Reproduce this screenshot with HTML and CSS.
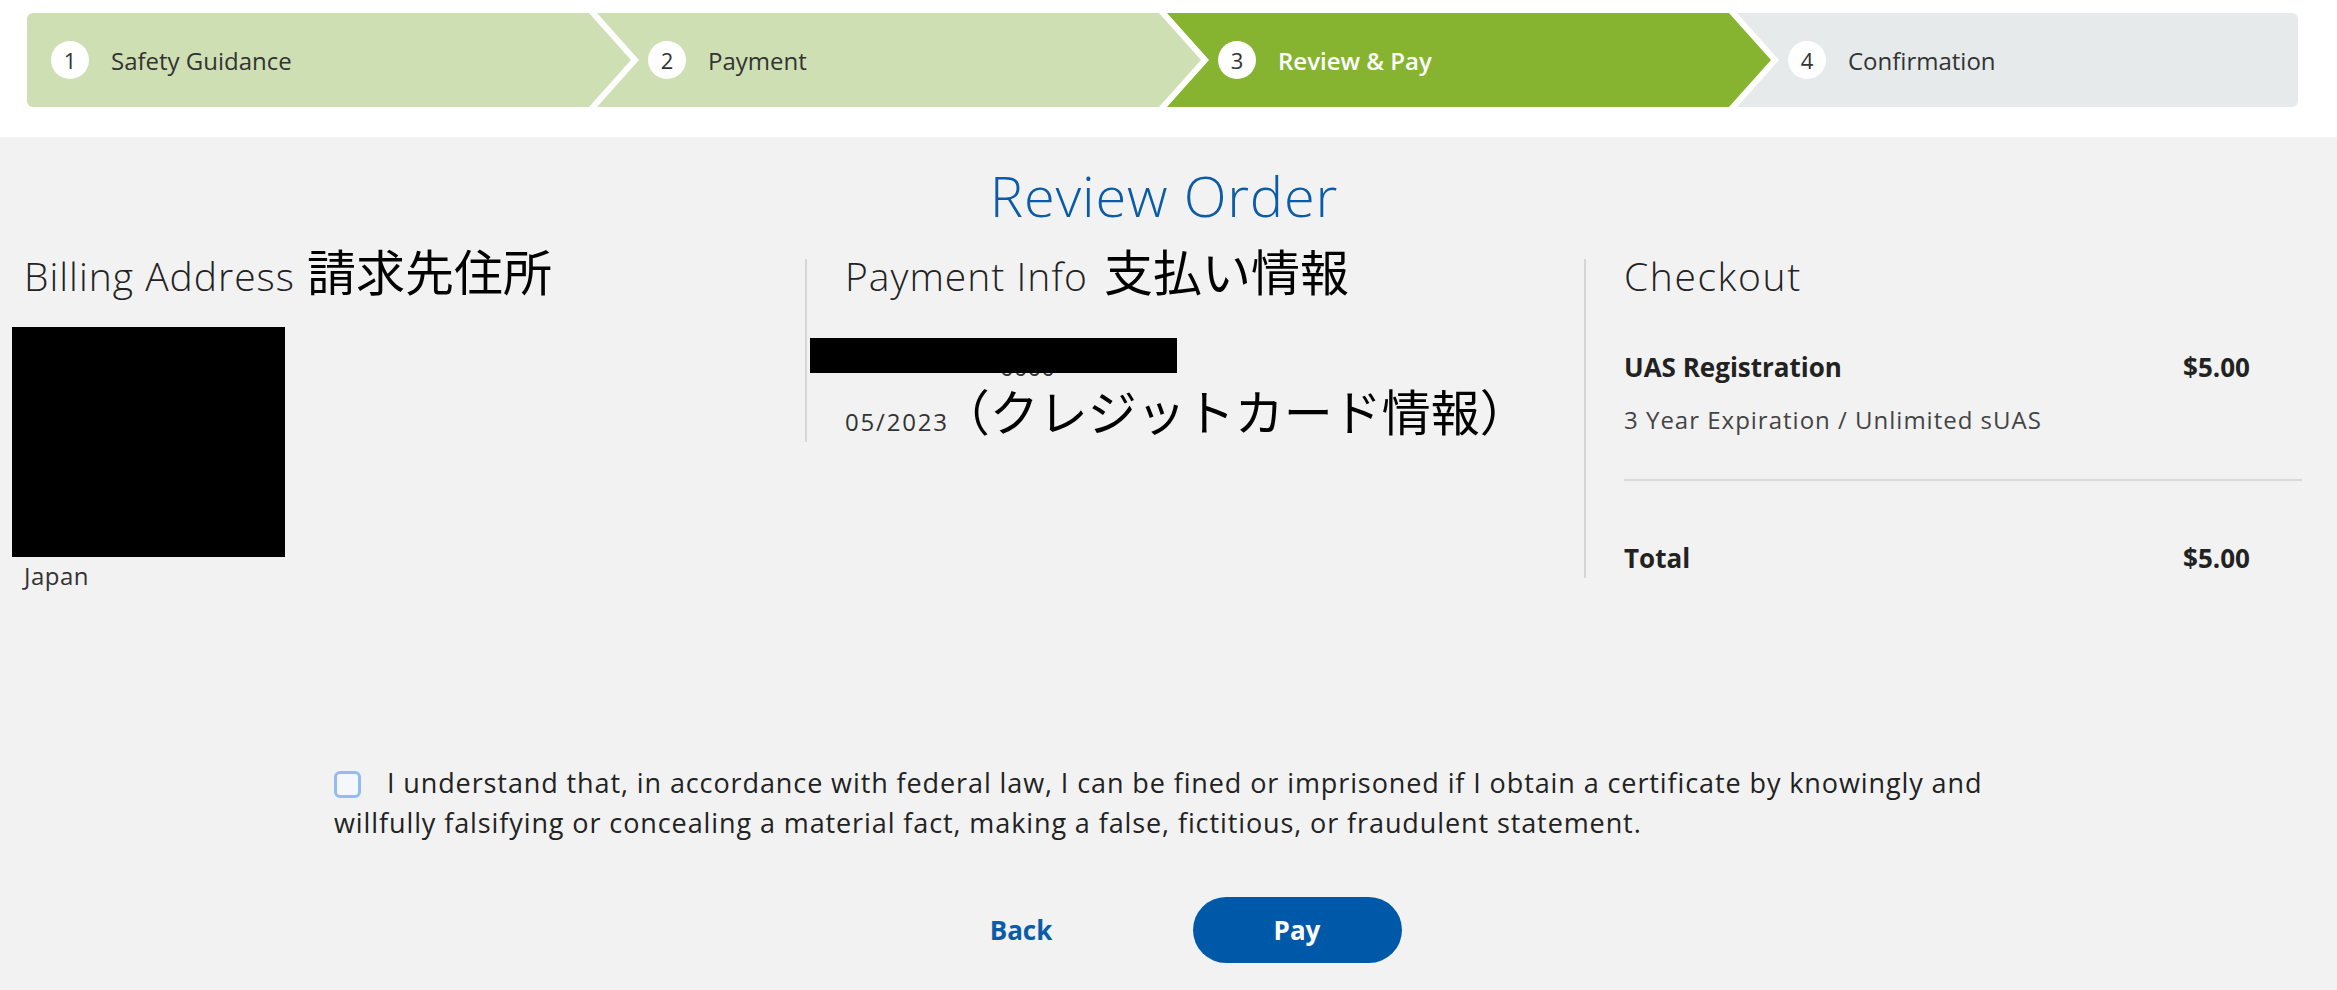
FILE: index.html
```html
<!DOCTYPE html>
<html lang="en">

<head>
    <meta charset="UTF-8">
    <meta name="viewport" content="width=device-width, initial-scale=1.0">
    <title>Review &amp; Pay</title>
    <link rel="stylesheet" href="styles.css">
</head>

<body>
    <!-- Progress steps -->
    <header class="steps-bar">
        <ol class="steps">
            <li class="step step-done"><span class="step-num">1</span>Safety Guidance</li>
            <li class="step step-done"><span class="step-num">2</span>Payment</li>
            <li class="step step-active"><span class="step-num">3</span>Review &amp; Pay</li>
            <li class="step"><span class="step-num">4</span>Confirmation</li>
        </ol>
    </header>

    <main class="review">
        <h1 class="review-title">Review Order</h1>

        <div class="review-cols">
            <!-- Billing -->
            <section class="col">
                <h2 class="col-title">Billing Address<span class="note">請求先住所</span></h2>
                <div class="redact-block"></div>
                <p class="address-country">Japan</p>
            </section>

            <!-- Payment -->
            <section class="col col-divided">
                <h2 class="col-title">Payment Info<span class="note note-near">支払い情報</span></h2>
                <div class="card-number">
                    <span class="card-mask">•••• •••• ••••</span> 0000
                    <span class="redact"></span>
                </div>
                <p class="card-expiry">05/2023<span class="note note-sm">（クレジットカード情報）</span></p>
            </section>

            <!-- Checkout -->
            <section class="col col-divided col-checkout">
                <h2 class="col-title checkout-title">Checkout</h2>
                <div class="line-item">
                    <span>UAS Registration</span>
                    <span>$5.00</span>
                </div>
                <p class="line-desc">3 Year Expiration / Unlimited sUAS</p>
                <hr class="line-sep">
                <div class="line-item line-total">
                    <span>Total</span>
                    <span>$5.00</span>
                </div>
            </section>
        </div>

        <label class="agree">
            <input type="checkbox" class="agree-box"> I understand that, in accordance with federal law, I can be fined or imprisoned if I obtain a certificate by knowingly and willfully falsifying or concealing a material fact, making a false, fictitious, or fraudulent statement.
        </label>

        <div class="actions">
            <button type="button" class="btn-back">Back</button>
            <button type="button" class="btn-pay">Pay</button>
        </div>
    </main>
</body>

</html>
```

FILE: styles.css
```css
body {
    margin: 0;
    background-color: #f2f2f2;
    font-family: "Open Sans", Arial, sans-serif;
    color: #333;
}

/* Steps */
.steps-bar {
    background-color: #fff;
    padding: 13px 39px 30px 27px;
}

.steps {
    display: flex;
    margin: 0;
    padding: 0;
    list-style: none;
}

.step {
    flex: 0 0 604px;
    box-sizing: border-box;
    height: 94px;
    margin-right: -34px;
    padding-left: 51px;
    display: flex;
    align-items: center;
    background-color: #cfdfb4;
    color: #333;
    font-size: 24px;
    font-weight: 500;
    clip-path: polygon(0 0, calc(100% - 42px) 0, 100% 50%, calc(100% - 42px) 100%, 0 100%, 42px 50%);
}

.step:first-child {
    padding-left: 24px;
    border-radius: 6px 0 0 6px;
    clip-path: polygon(0 0, calc(100% - 42px) 0, 100% 50%, calc(100% - 42px) 100%, 0 100%);
}

.step:last-child {
    flex: 1;
    margin-right: 0;
    border-radius: 0 6px 6px 0;
    background-color: #e6eaeb;
    clip-path: polygon(0 0, 100% 0, 100% 100%, 0 100%, 42px 50%);
}

.step-active {
    background-color: #86b431;
    color: #fff;
    font-weight: 600;
}

.step-num {
    flex-shrink: 0;
    width: 38px;
    height: 38px;
    margin-right: 22px;
    border-radius: 50%;
    background-color: #fff;
    color: #333;
    font-size: 22px;
    font-weight: 500;
    display: flex;
    align-items: center;
    justify-content: center;
}

/* Review */
.review-title {
    margin: 24px 0 30px;
    padding-right: 9px;
    text-align: center;
    font-size: 56px;
    line-height: 68px;
    font-weight: 300;
    letter-spacing: 0.8px;
    color: #0b5ca8;
}

.review-cols {
    display: grid;
    grid-template-columns: 781px 779px 1fr;
    align-items: start;
    padding: 0 35px 0 24px;
}

.col-divided {
    border-left: 2px solid #d6d6d6;
    padding-left: 38px;
}

.col-title {
    margin: 0;
    font-size: 39px;
    line-height: 34px;
    font-weight: 300;
    letter-spacing: 1px;
    color: #222;
}

.checkout-title {
    letter-spacing: 1.6px;
}

.note {
    margin-left: 12px;
    font-family: "Noto Sans CJK JP", sans-serif;
    font-size: 49px;
    font-weight: 400;
    line-height: 0;
    letter-spacing: 0;
    color: #000;
}

.note-near {
    margin-left: 16px;
}

.note-sm {
    margin-left: -8px;
}

.redact-block {
    width: 273px;
    height: 230px;
    margin: 34px 0 0 -12px;
    background-color: #000;
}

.address-country {
    margin: 4px 0 0;
    font-size: 24px;
    line-height: 30px;
    letter-spacing: 0.5px;
}

.card-number {
    position: relative;
    margin-top: 59px;
    font-size: 24px;
    line-height: 30px;
}

.card-mask {
    letter-spacing: 2px;
}

.redact {
    position: absolute;
    left: -35px;
    top: -14px;
    width: 367px;
    height: 35px;
    background-color: #000;
}

.card-expiry {
    margin: 20px 0 0;
    font-size: 24px;
    line-height: 40px;
    letter-spacing: 1.8px;
}

.col-checkout {
    padding-bottom: 4px;
}

.line-item {
    display: flex;
    justify-content: space-between;
    margin-top: 58px;
    padding-right: 52px;
    font-size: 26px;
    line-height: 32px;
    font-weight: 700;
    color: #222;
}

.line-desc {
    margin: 22px 0 0;
    font-size: 24px;
    line-height: 30px;
    letter-spacing: 1px;
    color: #444;
}

.line-sep {
    margin: 44px 0 0;
    border: 0;
    border-top: 2px solid #d9d9d9;
}

.line-total {
    margin-top: 61px;
}

/* Agreement */
.agree {
    display: block;
    margin: 172px 334px 0;
    font-size: 27px;
    line-height: 40px;
    letter-spacing: 0.9px;
    color: #222;
}

.agree-box {
    appearance: none;
    box-sizing: border-box;
    width: 27px;
    height: 27px;
    margin: 0 18px 0 0;
    border: 3px solid #92bcf3;
    border-radius: 6px;
    background-color: #f4f7fc;
    vertical-align: -5px;
}

/* Buttons */
.actions {
    display: flex;
    justify-content: center;
    gap: 67px;
    margin-top: 54px;
    padding-right: 19px;
}

button {
    width: 209px;
    height: 66px;
    border: none;
    border-radius: 33px;
    font-family: inherit;
    font-size: 26px;
    font-weight: 700;
    cursor: pointer;
}

.btn-back {
    background: none;
    color: #0b5ca8;
}

.btn-pay {
    background-color: #0059a8;
    color: #fff;
}
```
